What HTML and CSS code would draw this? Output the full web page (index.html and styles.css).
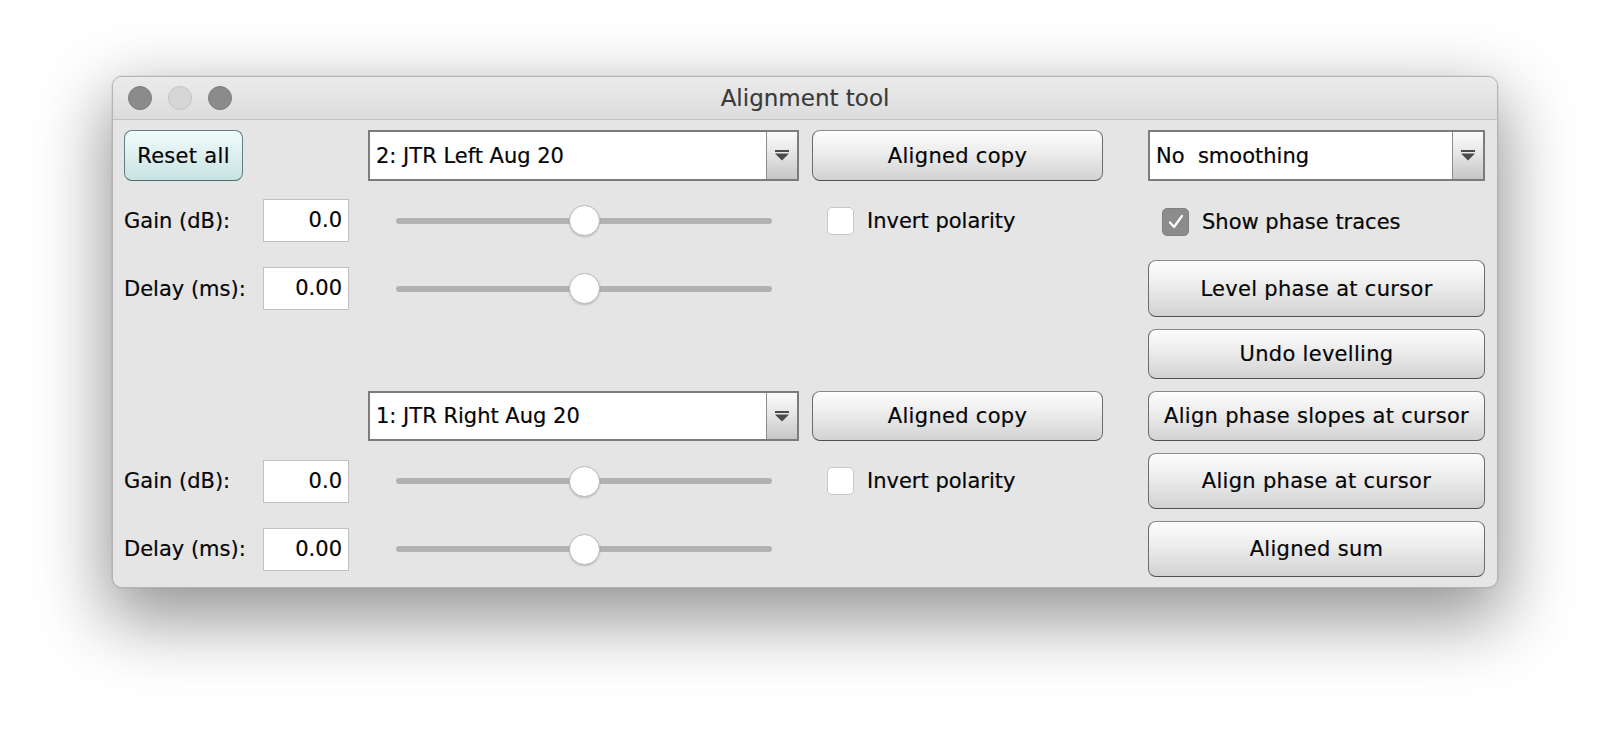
FILE: index.html
```html
<!DOCTYPE html>
<html>
<head>
<meta charset="utf-8">
<title>Alignment tool</title>
<link rel="stylesheet" href="styles.css">
</head>
<body>

<div class="window">
  <div class="titlebar">
    <div class="lights">
      <span class="light"></span>
      <span class="light off"></span>
      <span class="light"></span>
    </div>
    <div class="title">Alignment tool</div>
    <div></div>
  </div>

  <div class="panel">
    <!-- first trace -->
    <button class="btn default c1">Reset all</button>
    <div class="combo c3"><span class="combo-text">2: JTR Left Aug 20</span><span class="combo-arrow"><svg width="16" height="11" viewBox="0 0 16 11"><path d="M1 0h14v2H1z M1 3.5h14l-7 7z" fill="#4a4a4a"/></svg></span></div>
    <button class="btn c4">Aligned copy</button>
    <div class="combo c5"><span class="combo-text">No  smoothing</span><span class="combo-arrow"><svg width="16" height="11" viewBox="0 0 16 11"><path d="M1 0h14v2H1z M1 3.5h14l-7 7z" fill="#4a4a4a"/></svg></span></div>

    <span class="label c1">Gain (dB):</span>
    <span class="field c2">0.0</span>
    <div class="slider c3"><span class="thumb"></span></div>
    <label class="check c4"><span class="box"></span>Invert polarity</label>
    <label class="check right c5"><span class="box on"><svg width="18" height="16" viewBox="0 0 18 16"><path d="M3 8.5l4 4.5 8-11" fill="none" stroke="#fff" stroke-width="2.2" stroke-linecap="round" stroke-linejoin="round"/></svg></span>Show phase traces</label>

    <span class="label c1">Delay (ms):</span>
    <span class="field c2">0.00</span>
    <div class="slider c3"><span class="thumb"></span></div>
    <button class="btn c5">Level phase at cursor</button>

    <button class="btn c5">Undo levelling</button>

    <!-- second trace -->
    <div class="combo c3"><span class="combo-text">1: JTR Right Aug 20</span><span class="combo-arrow"><svg width="16" height="11" viewBox="0 0 16 11"><path d="M1 0h14v2H1z M1 3.5h14l-7 7z" fill="#4a4a4a"/></svg></span></div>
    <button class="btn c4">Aligned copy</button>
    <button class="btn c5">Align phase slopes at cursor</button>

    <span class="label c1">Gain (dB):</span>
    <span class="field c2">0.0</span>
    <div class="slider c3"><span class="thumb"></span></div>
    <label class="check c4"><span class="box"></span>Invert polarity</label>
    <button class="btn c5">Align phase at cursor</button>

    <span class="label c1">Delay (ms):</span>
    <span class="field c2">0.00</span>
    <div class="slider c3"><span class="thumb"></span></div>
    <button class="btn c5">Aligned sum</button>
  </div>
</div>

</body>
</html>
```

FILE: styles.css
```css
body {
   box-sizing: border-box;
   min-height: 736px;
   margin: 0;
   padding: 76px 0 0 112px;
   background-color: white;
   font-family: "DejaVu Sans", sans-serif;
   font-size: 21px;
   color: #050505;
   -webkit-text-stroke: 0.2px #050505;
}

.window {
   box-sizing: border-box;
   width: 1386px;
   height: 512px;
   border: 1px solid #b4b4b4;
   border-radius: 10px;
   background-color: #e5e5e5;
   box-shadow: 0 26px 70px 6px rgba(0, 0, 0, 0.42), 0 0 0 1px rgba(0, 0, 0, 0.05);
   overflow: hidden;
}

/* title bar */

.titlebar {
   display: grid;
   grid-template-columns: 1fr auto 1fr;
   align-items: center;
   height: 42px;
   border-bottom: 1px solid #c3c3c3;
   background: linear-gradient(#ebebeb, #dcdcdc);
}

.lights {
   display: flex;
   gap: 16px;
   padding-left: 15px;
}

.light {
   box-sizing: border-box;
   width: 24px;
   height: 24px;
   border-radius: 50%;
   background-color: #8b8b8b;
   border: 1px solid #7c7c7c;
}

.light.off {
   background-color: #d6d6d6;
   border-color: #c4c4c4;
}

.title {
   font-size: 23px;
   color: #3a3a3a;
   -webkit-text-stroke: 0.15px #3a3a3a;
}

/* controls */

.panel {
   display: grid;
   grid-template-columns: 139px 105px 444px 336px 337px;
   grid-template-rows: 51px 55px 57px 50px 50px 56px 56px;
   row-gap: 12px;
   padding: 10px 0 0 11px;
}

.c1 { grid-column: 1; }
.c2 { grid-column: 2; }
.c3 { grid-column: 3; }
.c4 { grid-column: 4; }
.c5 { grid-column: 5; }

.label {
   align-self: center;
   white-space: nowrap;
}

.field {
   box-sizing: border-box;
   align-self: center;
   width: 86px;
   height: 43px;
   line-height: 41px;
   padding-right: 6px;
   text-align: right;
   background-color: white;
   border: 1px solid #c2c2c2;
}

.btn {
   box-sizing: border-box;
   margin: 0;
   padding: 0;
   font: inherit;
   color: #050505;
   letter-spacing: 0.3px;
   border: 1px solid #6c6c6c;
   border-bottom-color: #505050;
   border-top-color: #8a8a8a;
   border-radius: 8px;
   background: linear-gradient(#fdfdfd, #ececec 45%, #d2d2d2);
   box-shadow: inset 0 1px 0 rgba(255, 255, 255, 0.8);
}

.btn.c4 {
   width: 291px;
}

.btn.default {
   width: 119px;
   border-color: #5f8080;
   border-bottom-color: #4c6a6a;
   background: linear-gradient(#f1fbfb, #dff0f0 45%, #c8e3e3);
}

.combo {
   box-sizing: border-box;
   display: flex;
   width: 431px;
   border: 2px solid #7c7c7c;
   background-color: white;
}

.combo.c5 {
   width: 337px;
}

.combo-text {
   flex: 1;
   align-self: center;
   padding-left: 6px;
   white-space: pre;
}

.combo-arrow {
   display: flex;
   align-items: center;
   justify-content: center;
   width: 30px;
   border-left: 1px solid #8d8d8d;
   box-shadow: -1px 0 0 #ffffff;
   background: linear-gradient(#fbfbfb, #e6e6e6 45%, #c6c6c6);
}

.slider {
   align-self: center;
   display: flex;
   align-items: center;
   justify-content: center;
   width: 376px;
   height: 6px;
   margin-left: 28px;
   border-radius: 3px;
   background-color: #b2b2b2;
}

.thumb {
   box-sizing: border-box;
   flex-shrink: 0;
   width: 31px;
   height: 31px;
   border-radius: 50%;
   background-color: white;
   border: 1px solid #bcbcbc;
   box-shadow: 0 1px 2px rgba(0, 0, 0, 0.18);
}

.check {
   align-self: center;
   display: flex;
   align-items: center;
   gap: 13px;
   padding-left: 15px;
   white-space: nowrap;
}

.check.right {
   align-self: start;
   margin-top: 15px;
   padding-left: 14px;
}

.box {
   box-sizing: border-box;
   display: flex;
   align-items: center;
   justify-content: center;
   width: 27px;
   height: 28px;
   border-radius: 5px;
   background-color: white;
   border: 1px solid #c6c6c6;
   -webkit-text-stroke: 0;
}

.box.on {
   background-color: #8c8c8c;
   border-color: #808080;
}
```
